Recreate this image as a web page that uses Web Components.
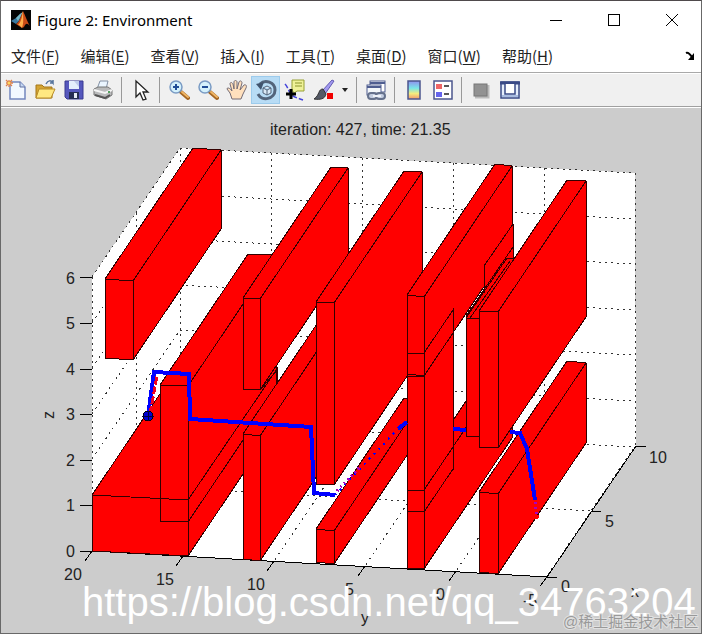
<!DOCTYPE html>
<html lang="zh-CN">
<head>
<meta charset="utf-8">
<title>Figure 2: Environment</title>
<style>
html, body { height: 100%; margin: 0; }
body { background: #5b5b5b; font-family: "Liberation Sans", "Noto Sans CJK SC", sans-serif; }
</style>
</head>
<body>
<app-window>
  <title-bar slot="title">Figure 2: Environment</title-bar>
  <menu-bar slot="menu">
    <menu-entry key="F">文件</menu-entry><menu-entry key="E">编辑</menu-entry><menu-entry key="V">查看</menu-entry><menu-entry key="I">插入</menu-entry><menu-entry key="T">工具</menu-entry><menu-entry key="D">桌面</menu-entry><menu-entry key="W">窗口</menu-entry><menu-entry key="H">帮助</menu-entry>
  </menu-bar>
  <tool-bar slot="tools">
    <tool-button icon="new" label="New Figure"></tool-button>
    <tool-button icon="open" label="Open File"></tool-button>
    <tool-button icon="save" label="Save Figure"></tool-button>
    <tool-button icon="print" label="Print Figure"></tool-button>
    <tool-divider></tool-divider>
    <tool-button icon="arrow" label="Edit Plot"></tool-button>
    <tool-divider></tool-divider>
    <tool-button icon="zoomin" label="Zoom In"></tool-button>
    <tool-button icon="zoomout" label="Zoom Out"></tool-button>
    <tool-button icon="hand" label="Pan"></tool-button>
    <tool-button icon="rotate" label="Rotate 3D" active></tool-button>
    <tool-button icon="cursor" label="Data Cursor"></tool-button>
    <tool-button icon="brush" label="Brush"></tool-button>
    <tool-button icon="caret" label="Brush options" narrow></tool-button>
    <tool-divider></tool-divider>
    <tool-button icon="link" label="Link Plot"></tool-button>
    <tool-divider></tool-divider>
    <tool-button icon="colorbar" label="Insert Colorbar"></tool-button>
    <tool-button icon="legend" label="Insert Legend"></tool-button>
    <tool-divider></tool-divider>
    <tool-button icon="hide" label="Hide Plot Tools"></tool-button>
    <tool-button icon="dock" label="Show Plot Tools"></tool-button>
  </tool-bar>
  <environment-plot></environment-plot>
</app-window>

<script>
const define = (name, html, setup) => {
  const template = document.createElement('template');
  template.innerHTML = html;
  customElements.define(name, class extends HTMLElement {
    constructor() {
      super();
      this.attachShadow({ mode: 'open' }).append(template.content.cloneNode(true));
    }
    connectedCallback() { if (setup) setup(this, this.shadowRoot); }
  });
};

define('app-window', `
<style>
:host { display: flex; flex-direction: column; box-sizing: border-box; min-height: 100%; height: 100vh; border: 1px solid #686868; border-top-color: #4f4a4c; background: #fff; }
main { flex: 1; min-height: 0; display: flex; background: #ccc; }
</style>
<slot name="title"></slot><slot name="menu"></slot><slot name="tools"></slot><main><slot></slot></main>`);

define('title-bar', `
<style>
:host { display: flex; align-items: center; height: 38px; padding-left: 10px; color: #000; font: 15px/24px "Noto Sans", "Open Sans", sans-serif; }
h1 { flex: 1; margin: 0; padding-left: 6px; font: inherit; }
svg { display: block; }
button { width: 58px; height: 38px; padding: 0; border: 0; background: none; display: grid; place-items: center; }
</style>
<svg width="20" height="20" viewBox="0 0 20 20"><rect width="20" height="20" fill="#050505"/><path d="M0 11 L5 8 L9 4 L12 2 L8 11 L5 14Z" fill="#3979a0"/><path d="M5 8 L9 4 L12 2 L7 11Z" fill="#76b7c5"/><path d="M12 1 C14 5 17 13 19 16 C16 13 15 13 13 17 C11 19 10 17 5 14 C9 12 10 5 12 1Z" fill="#c94a16"/><path d="M12 1 C12 7 13 13 11 18 C9 16 9 15 7 15 C11 11 11 5 12 1Z" fill="#ffae4a"/></svg>
<h1><slot></slot></h1>
<button aria-label="Minimize"><svg width="12" height="12"><path d="M0 6.5H12" stroke="#000"/></svg></button>
<button aria-label="Maximize"><svg width="12" height="12"><rect x=".5" y=".5" width="11" height="11" fill="none" stroke="#000"/></svg></button>
<button aria-label="Close"><svg width="12" height="12"><path d="M0 0L12 12M12 0L0 12" stroke="#000"/></svg></button>`);

define('menu-bar', `
<style>
:host { display: flex; align-items: center; height: 33px; padding: 0 6px 0 10px; }
nav { display: flex; flex: 1; gap: 21px; }
</style>
<nav><slot></slot></nav>
<svg width="10" height="10" viewBox="0 0 10 10"><path d="M1 2C3 1 5 3 7 6" fill="none" stroke="#000" stroke-width="2"/><path d="M9 2V9H3Z" fill="#000"/></svg>`);

define('menu-entry', `
<style>
:host { display: block; }
button { display: block; padding: 0; border: 0; background: none; color: #222; white-space: nowrap; font: 15px/24px "Noto Sans CJK SC", sans-serif; }
u { text-underline-offset: 2px; }
</style>
<button><slot></slot>(<u></u>)</button>`, (host, root) => {
  root.querySelector('u').textContent = host.getAttribute('key');
});

define('tool-bar', `
<style>
:host { display: flex; align-items: center; height: 33px; border-top: 1px solid #a9a9a9; border-bottom: 1px solid #a0a0a0; background: #f0f0f0; box-shadow: inset 0 1px #fff; margin-bottom: 1px; }
</style><slot></slot>`);

define('tool-divider', `
<style>
:host { display: block; width: 9px; height: 26px; background: linear-gradient(#999, #999) 4px 0 / 1px 100% no-repeat; }
</style>`);

const lens = sign => `<path d="M13 13L20 19" stroke="#a46624" stroke-width="4" stroke-linecap="round"/><path d="M14 13L20 18" stroke="#efb565" stroke-width="2" stroke-linecap="round"/><circle cx="8" cy="8" r="6" fill="#d4f1fc" stroke="#7a9bc4" stroke-width="1.5"/><path d="M5 8H11${sign}" stroke="#204e97" stroke-width="2"/>`;
const icons = {
  new: `<path d="M5 3H15L20 8V20H5Z" fill="#f2f8ff" stroke="#7386bf" stroke-width="1.5"/><path d="M15 3V8H20" fill="#c6d8f2" stroke="#62709f"/><path d="M4 1V8M1 4H8M1 1L7 7M7 1L1 7" stroke="#df804c" stroke-width="1.3"/><circle cx="4" cy="4" r="1.5" fill="#ffd75d"/>`,
  open: `<path d="M2 19V6H8L10 8H18V19Z" fill="#d4a434" stroke="#a47719"/><path d="M5 10H21L17 19H2Z" fill="#ffe881" stroke="#b88c28"/><path d="M12 5C14 1 17 1 19 4V1M19 4H16" fill="none" stroke="#56749c" stroke-width="1.5"/>`,
  save: `<path d="M2 2H20V20H4L2 18Z" fill="#5557bd" stroke="#3b3a91"/><rect x="6" y="2" width="10" height="8" fill="#e4effc"/><path d="M11 2H16V8Z" fill="#bdcbea"/><rect x="6" y="13" width="10" height="7" fill="#252c52"/><rect x="11" y="14" width="3" height="5" fill="#e5eaf3"/>`,
  print: `<path d="M5 10L8 2H16L14 10Z" fill="#eaf5ff" stroke="#8391a5"/><path d="M2 10L6 8H16L20 11V16L14 20L2 16Z" fill="#b9babb" stroke="#777"/><path d="M2 11L13 14L20 11" fill="none" stroke="#f5f5f5" stroke-width="2"/><path d="M3 16L13 19L18 16" fill="none" stroke="#555" stroke-width="2"/><path d="M16 13H18" stroke="#53a15e" stroke-width="2"/>`,
  arrow: `<path d="M6 2V18L10 14L13 21L16 20L13 13H18Z" fill="#fff" stroke="#222" stroke-width="1.3"/>`,
  zoomin: lens('M8 5V11'),
  zoomout: lens(''),
  hand: `<path d="M6 20L4 14L1 10C1 8 4 9 6 12L4 5C4 3 6 3 7 5L8 10L8 3C8 1 11 1 11 3L11 10L13 3C14 1 16 2 16 4L14 11L18 6C20 5 21 7 20 9L17 15L15 20Z" fill="#ffe0bd" stroke="#756c75"/>`,
  rotate: `<path d="M5 5C10 0 20 3 20 11C20 20 7 23 3 15" fill="none" stroke="#53647b" stroke-width="3"/><path d="M1 5L9 3L6 11Z" fill="#40546e"/><path d="M8 9L12 7L16 9V14L12 16L8 14ZM8 9L12 11L16 9M12 11V16" fill="#dbe9f6" stroke="#53647b"/>`,
  cursor: `<path d="M8 1H20V12H13L9 15V12H8Z" fill="#eff198" stroke="#97a034"/><path d="M11 4H18M11 7H18" stroke="#8a942d"/><path d="M1 5C3 7 4 10 6 14S14 19 19 21" fill="none" stroke="#4544db" stroke-width="1.5" stroke-dasharray="5 2"/><path d="M7 10V20M2 15H12" stroke="#000" stroke-width="3"/>`,
  brush: `<path d="M19 1L9 12L12 15L21 2Z" fill="#a29af0" stroke="#625ab2"/><path d="M10 10C5 10 7 16 1 20C7 21 12 20 13 15Z" fill="#545966" stroke="#333"/><rect x="14" y="14" width="6" height="6" fill="#f10000"/>`,
  caret: `<path d="M8 9H14L11 13Z" fill="#222"/>`,
  link: `<rect x="5" y="2" width="15" height="11" fill="#fff" stroke="#4e5d90"/><path d="M5 4H20" stroke="#4e5d90" stroke-width="2"/><rect x="2" y="6" width="14" height="10" fill="#f3f7fa" stroke="#4e5d90"/><path d="M2 8H16" stroke="#4e5d90" stroke-width="2"/><rect x="3" y="14" width="9" height="6" rx="3" fill="#c3cde0" stroke="#65718c" stroke-width="2"/><rect x="11" y="14" width="9" height="6" rx="3" fill="#c3cde0" stroke="#65718c" stroke-width="2"/><path d="M8 17H16" stroke="#eef2f8" stroke-width="2"/>`,
  colorbar: `<defs><linearGradient id="scale" x2="0" y2="1"><stop stop-color="#918ff0"/><stop offset=".4" stop-color="#78e7e8"/><stop offset=".7" stop-color="#f5ec7d"/><stop offset="1" stop-color="#f1966e"/></linearGradient></defs><rect x="5" y="2" width="12" height="18" fill="url(#scale)" stroke="#4b568d" stroke-width="1.5"/>`,
  legend: `<rect x="2" y="2" width="18" height="18" fill="#fff" stroke="#4b568d" stroke-width="1.5"/><rect x="4" y="5" width="6" height="5" fill="#ef6666"/><rect x="4" y="13" width="6" height="5" fill="#6564ed"/><path d="M12 7H17M12 15H17" stroke="#222" stroke-width="1.5"/>`,
  hide: `<path d="M5 18H18V6" fill="none" stroke="#bbb" stroke-width="3"/><rect x="4" y="5" width="13" height="12" fill="#929292" stroke="#777"/>`,
  dock: `<rect x="2" y="3" width="18" height="16" fill="#e6eefb" stroke="#394a86" stroke-width="1.5"/><path d="M1 4H21" stroke="#394a86" stroke-width="3"/><path d="M3 17H19" stroke="#a9bce0" stroke-width="2"/><path d="M6 5V15H16V5" fill="#fff" stroke="#394a86" stroke-width="1.5"/>`
};

define('tool-button', `
<style>
:host { display: block; width: 29px; }
:host([narrow]) { width: 14px; }
button { display: grid; place-content: center; box-sizing: border-box; width: 100%; height: 28px; padding: 0; border: 0; background: none; }
:host([active]) button { background: #b8dcf5; border: 1px solid #9ccbec; }
svg { display: block; }
</style><button></button>`, (host, root) => {
  const button = root.querySelector('button');
  button.setAttribute('aria-label', host.getAttribute('label'));
  button.innerHTML = `<svg width="22" height="22" viewBox="0 0 22 22">${icons[host.getAttribute('icon')]}</svg>`;
});

/* Scene geometry: depth 1 spans the whole x axis, 88 right and 131 up. */
const box = (x, y, w, h, drop = 1, depth = 1) => {
  const dx = Math.round(88 * depth), dy = Math.round(131 * depth), r = x + w, t = y + drop;
  return `<path d="M${x} ${y}L${x + dx} ${y - dy}L${r + dx} ${t - dy}L${r} ${t}Z"/>` +
    `<path d="M${r} ${t}L${r + dx} ${t - dy}V${t - dy + h}L${r} ${t + h}Z"/>` +
    `<path d="M${x} ${y}L${r} ${t}V${t + h}L${x} ${y + h}Z"/>`;
};
const gridLines = () => {
  let d = '';
  for (let k = 0; k < 7; k++) {
    const z = Math.round(k * 45.6);
    d += `M92 ${277 + z}L180 ${148 + z}L635 ${173 + z}`;
  }
  for (let k = 0; k < 6; k++) {
    const x = 91 * k, y = 5 * k;
    d += `M${180 + x} ${148 + y}V${421 + y}L${92 + x} ${551 + y}`;
  }
  return d + 'M92 277V551M136 213V486L592 511';
};
const label = (x, y, s) => `<text x="${x}" y="${y}">${s}</text>`;

define('environment-plot', `
<style>
:host { display: block; flex: 1; min-width: 0; font: 16px "Liberation Sans", "Noto Sans CJK SC", sans-serif; }
svg { display: block; width: 100%; height: 100%; }
.scene { shape-rendering: crispEdges; }
.grid, .axis, .edge { fill: none; stroke: #000; }
.grid { stroke: #333; stroke-dasharray: 2 4; }
.boxes { fill: #f00; stroke: #300; stroke-linejoin: round; }
.edge { stroke: #300; }
.trail { fill: none; stroke: #00f; stroke-width: 4; }
.labels { fill: #222; }
.site { fill: #fff; font-size: 40px; }
.credit { fill: #999; stroke: #e0e0e0; stroke-width: 2px; paint-order: stroke; font-size: 15px; }
</style>
<svg viewBox="1 108 700 525" role="img" aria-label="Environment plot">
  <g class="scene">
    <path d="M92 277L180 148L635 173L636 446L547 577L92 551Z" fill="#fff"/>
    <path class="grid" d="${gridLines()}"/>
    <path class="axis" d="M92 551L547 577L636 446M80 277H92M80 323H92M80 369H92M80 414H92M80 460H92M80 505H92M80 551H92M92 551L85 561M183 556L176 566M274 561L267 571M365 566L358 576M456 571L449 581M547 577L540 586M547 577H557M592 511H601M636 446H646"/>
    <g class="boxes">
      ${box(105, 279, 28, 79, 2)}
      ${box(92, 495, 96, 56, 5)}
      ${box(160, 385, 28, 136)}
      ${box(243, 434, 17, 125, 2)}
      ${box(243, 298, 17, 91)}
      ${box(316, 529, 18, 33, 2)}
      ${box(316, 302, 18, 182)}
      ${box(407, 489, 17, 79)}
      ${box(466, 318, 18, 118, 1, .46)}
      ${box(407, 352, 17, 159, 1, .33)}
      ${box(407, 295, 17, 79, 2)}
      <path d="M484 266L513 224V262L484 304Z" stroke="none"/>
      <path d="M466 436V318L473 308L484 300V436Z" stroke="none"/>
      <path d="M466 436V318L484 319M513 224V260" fill="none"/>
      ${box(479, 492, 19, 80, 2)}
      ${box(479, 311, 19, 136)}
    </g>
    <path class="edge" d="M92 495L188 500L277 369V384M407 353H424L453 310V470M407 376H424L453 333M407 490H424L453 447M484 266L513 224M484 293V266M466 316L513 247M466 318L507 258H513M470 318L510 261M261 389L277 370"/>
  </g>
  <g class="scene">
    <path class="trail" d="M148 416L154 372L189 374L190 419L311 427L314 493L335 495M398 429L407 422M453 429L466 430M510 432L520 433L527 449L535 500"/>
    <path class="trail" d="M335 495L398 429" stroke-dasharray="2 5" style="stroke-width:2"/>
    <path d="M337 491L360 467M535 502L537 516" stroke="#a0b" stroke-width="3" stroke-dasharray="2 3"/>
    <path d="M150 414L157 376" stroke="#f00020" stroke-width="3" stroke-dasharray="8 2"/>
    <circle cx="537" cy="517" r="2" fill="#f00"/>
    <circle cx="148" cy="416" r="5" fill="#0000d0" stroke="#001"/>
    <path d="M142 416H154M148 411V421" stroke="#000040"/>
  </g>
  <g class="labels">
    ${label(270, 135, 'iteration: 427, time: 21.35')}
    ${label(66, 284, '6')}${label(66, 329, '5')}${label(66, 375, '4')}${label(66, 420, '3')}${label(66, 466, '2')}${label(66, 511, '1')}${label(66, 557, '0')}
    ${label(64, 580, '20')}${label(156, 585, '15')}${label(247, 590, '10')}${label(345, 595, '5')}${label(436, 600, '0')}${label(523, 606, '-5')}
    ${label(561, 592, '0')}${label(605, 527, '5')}${label(649, 463, '10')}
    ${label(631, 597, 'x')}${label(361, 623, 'y')}
    <text transform="translate(54 419) rotate(-90)">z</text>
  </g>
  <text class="site" x="82" y="616">https://blog.csdn.net/qq_34763204</text>
  <text class="credit" x="563" y="627">@稀土掘金技术社区</text>
</svg>`);
</script>
</body>
</html>
